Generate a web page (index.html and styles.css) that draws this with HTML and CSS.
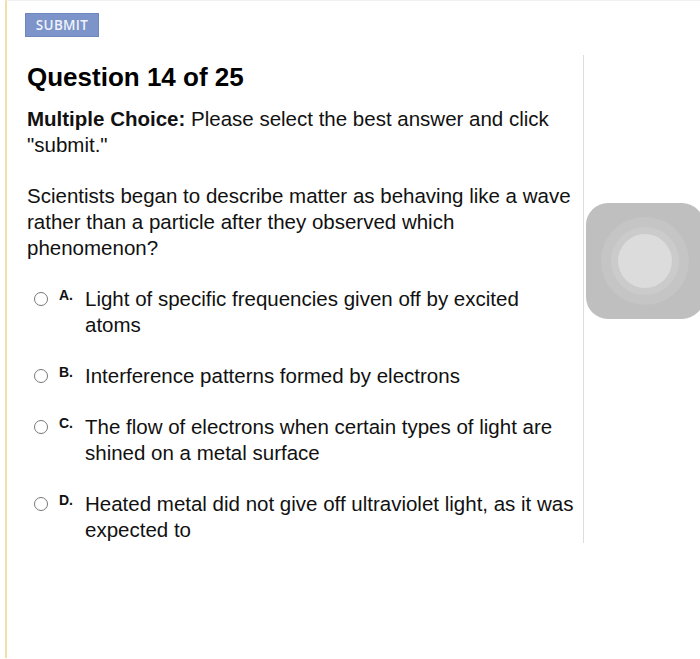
FILE: index.html
```html
<!DOCTYPE html>
<html lang="en">
<head>
    <meta charset="UTF-8">
    <meta name="viewport" content="width=device-width, initial-scale=1.0">
    <title>Question 14 of 25</title>
    <link rel="stylesheet" href="styles.css">
</head>
<body>

    <div class="page">
        <div class="toolbar">
            <button class="submit">SUBMIT</button>
        </div>

        <div class="question">
            <h1>Question 14 of 25</h1>
            <p class="prompt"><strong>Multiple Choice:</strong> Please select the best answer and click "submit."</p>
            <p class="stem">Scientists began to describe matter as behaving like a wave rather than a particle after they observed which phenomenon?</p>

            <ul class="choices">
                <li class="choice">
                    <span class="radio"></span>
                    <span class="letter">A.</span>
                    <span class="text">Light of specific frequencies given off by excited atoms</span>
                </li>
                <li class="choice">
                    <span class="radio"></span>
                    <span class="letter">B.</span>
                    <span class="text">Interference patterns formed by electrons</span>
                </li>
                <li class="choice">
                    <span class="radio"></span>
                    <span class="letter">C.</span>
                    <span class="text">The flow of electrons when certain types of light are shined on a metal surface</span>
                </li>
                <li class="choice">
                    <span class="radio"></span>
                    <span class="letter">D.</span>
                    <span class="text">Heated metal did not give off ultraviolet light, as it was expected to</span>
                </li>
            </ul>
        </div>

        <!-- floating assistive touch button -->
        <div class="assist"><span class="knob"></span></div>
    </div>

</body>
</html>
```

FILE: styles.css
```css
body {
    font-family: "Liberation Sans", Arial, sans-serif;
    background-color: #fff;
    color: #111;
    margin: 0;
    padding: 0;
    overflow: hidden;
}

.page {
    position: relative;
    height: 657px;
    margin-left: 5px;
    border-left: 2px solid #f6dea9;
    border-top: 1px solid #f1f1f1;
}

.toolbar {
    height: 54px;
    padding: 12px 0 0 18px;
    box-sizing: border-box;
}

.submit {
    width: 74px;
    height: 24px;
    padding: 0;
    background-color: #7c94c9;
    border: 1px solid #6d86bd;
    color: #eef2fb;
    font-family: "Open Sans", sans-serif;
    font-size: 13.5px;
    font-weight: 600;
    letter-spacing: 0.3px;
}

.question {
    width: 549px;
    margin-left: 20px;
    padding: 7px 7px 0 0;
    border-right: 1px solid #dcdcdc;
}

.question h1 {
    margin: 0;
    font-size: 26px;
    line-height: 30px;
    font-weight: bold;
    color: #000;
}

.prompt, .stem {
    margin: 14px 0 0;
    font-size: 20.5px;
    line-height: 26px;
}

.stem {
    margin-top: 25px;
}

.choices {
    list-style-type: none;
    margin: 25px 0 0;
    padding: 0;
}

.choice {
    display: flex;
    align-items: flex-start;
    font-size: 20.5px;
    line-height: 26px;
    margin-bottom: 25px;
}

.choice:last-child {
    margin-bottom: 0;
}

.radio {
    flex: none;
    width: 12px;
    height: 12px;
    margin: 6px 0 0 7px;
    border: 1.5px solid #777;
    border-radius: 50%;
}

.letter {
    flex: none;
    width: 26px;
    margin-left: 11px;
    font-size: 14px;
    font-weight: bold;
    line-height: 18px;
}

.text {
    flex: 1;
}

.assist {
    position: absolute;
    left: 579px;
    top: 202px;
    width: 118px;
    height: 116px;
    border-radius: 22px;
    background-color: #bfbfbf;
    display: flex;
    align-items: center;
    justify-content: center;
}

.knob {
    width: 54px;
    height: 54px;
    border-radius: 50%;
    background-color: #dcdcdc;
    box-shadow: 0 0 0 7px #cbcbcb, 0 0 0 17px #c5c5c5;
}
```
